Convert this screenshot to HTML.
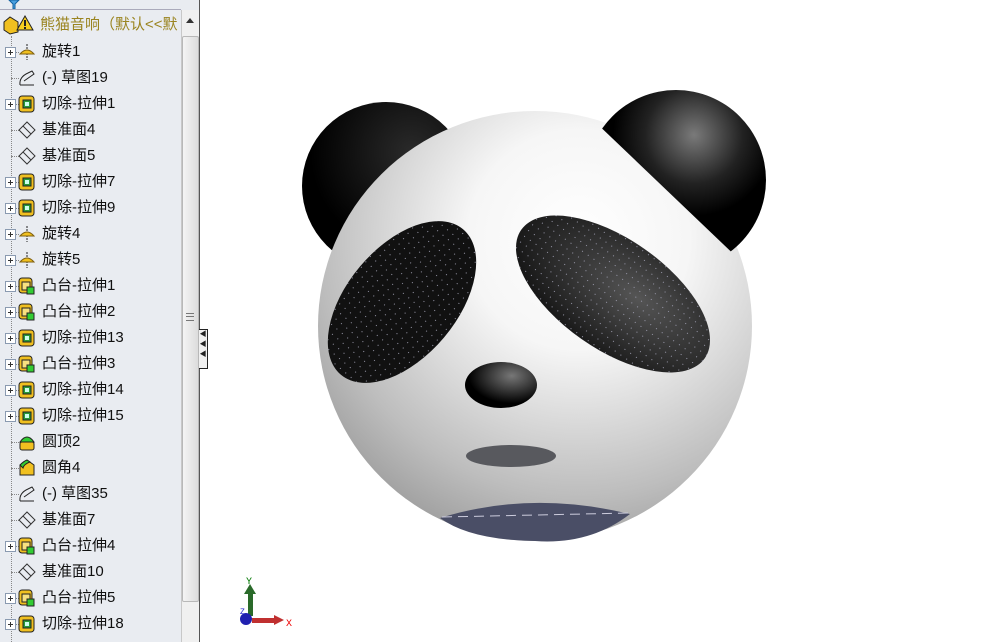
<!DOCTYPE html>
<html><head><meta charset="utf-8"><style>
body{margin:0;width:999px;height:642px;overflow:hidden;background:#fff;position:relative;font-family:"Liberation Sans","Noto Sans CJK SC",sans-serif}
#panel{position:absolute;left:0;top:0;width:199px;height:642px;background:#e9ecf1;border-right:1px solid #555}
.row{position:absolute;left:0;height:26px;width:181px;font-size:15px;color:#111;line-height:26px}
.row span{position:absolute;left:42px;top:0;white-space:nowrap}
.pl{position:absolute;left:5px;top:8px;width:9px;height:9px;border:1px solid #8a9ab0;background:#fff}
.pl:before{content:"";position:absolute;left:2px;top:4px;width:5px;height:1px;background:#333}
.pl:after{content:"";position:absolute;left:4px;top:2px;width:1px;height:5px;background:#333}
.ic{position:absolute;left:18px;top:4px}
#vline{position:absolute;left:11px;top:36px;height:606px;border-left:1px dotted #888}
.hd{position:absolute;left:11px;top:0;width:8px;border-top:1px dotted #888}
</style></head><body>
<svg width="0" height="0" style="position:absolute">
<defs>
<symbol id="cut" viewBox="0 0 18 18"><rect x="1" y="1" width="15" height="16" rx="3" fill="#f0c020" stroke="#222"/><rect x="5" y="5" width="8" height="8" fill="#2a9a3a" stroke="#222"/><rect x="7" y="7" width="4" height="4" fill="#cfe"/></symbol>
<symbol id="boss" viewBox="0 0 18 18"><rect x="1" y="1" width="13" height="15" rx="3" fill="#f0c020" stroke="#222"/><rect x="4" y="5" width="8" height="8" fill="#f6e080" stroke="#222"/><rect x="9" y="10" width="7" height="7" fill="#3c3" stroke="#222"/></symbol>
<symbol id="rev" viewBox="0 0 18 18"><line x1="9" y1="1" x2="9" y2="17" stroke="#222" stroke-dasharray="2 1"/><path d="M2 11 Q9 3 16 11 Z" fill="#f0c020" stroke="#806010"/></symbol>
<symbol id="sk" viewBox="0 0 18 18"><path d="M2 16 Q1 8 10 4 L14 2 L16 5 L6 12 M2 16 H16" fill="none" stroke="#222"/></symbol>
<symbol id="pln" viewBox="0 0 18 18"><path d="M9 1 L17 9 L9 17 L1 9 Z M5 5 L13 13" fill="none" stroke="#333"/></symbol>
<symbol id="dome" viewBox="0 0 18 18"><path d="M2 9 Q9 -1 16 9 Z" fill="#3c3" stroke="#222"/><rect x="2" y="9" width="14" height="8" rx="2" fill="#f0c020" stroke="#222"/></symbol>
<symbol id="fil" viewBox="0 0 18 18"><path d="M2 6 L9 1 L16 6 L16 16 L2 16 Z" fill="#f0c020" stroke="#222"/><path d="M2 6 Q6 2 9 1 L12 3 Q6 5 5 9 Z" fill="#3c3" stroke="#222"/></symbol>
</defs></svg>
<div id="panel">
<svg style="position:absolute;left:8px;top:0" width="12" height="9"><path d="M1 0 H11 L7 4 V9 H5 V4 Z" fill="#4aa0e0" stroke="#1060a0"/></svg>
<div style="position:absolute;left:0;top:9px;width:181px;border-top:1px solid #aab"></div>
<svg style="position:absolute;left:2px;top:14px" width="38" height="22"><path d="M2 8 L8 3 L16 8 L16 18 L8 20 L2 16 Z" fill="#f0c020" stroke="#222"/><path d="M23 2 L31 16 L15 16 Z" fill="#f8d020" stroke="#222"/><rect x="22" y="6" width="2" height="6" fill="#222"/><rect x="22" y="13" width="2" height="2" fill="#222"/></svg>
<div style="position:absolute;left:40px;top:14px;font-size:15px;color:#9a8420;white-space:nowrap;line-height:22px">熊猫音响（默认&lt;&lt;默</div>
<div id="vline"></div>
<div id="rows"></div>
<div style="position:absolute;left:181px;top:10px;width:17px;height:632px;background:#f0f0f0;border-left:1px solid #c8c8c8"></div>
<div style="position:absolute;left:186px;top:18px;width:0;height:0;border-left:4px solid transparent;border-right:4px solid transparent;border-bottom:5px solid #333"></div>
<div style="position:absolute;left:182px;top:36px;width:15px;height:564px;background:linear-gradient(90deg,#f4f4f4,#dcdcdc);border:1px solid #b8b8b8;border-radius:2px"></div>
<div style="position:absolute;left:186px;top:313px;width:8px;height:6px;border-top:1px solid #777;border-bottom:1px solid #777"></div>
<div style="position:absolute;left:186px;top:316px;width:8px;border-top:1px solid #777"></div>
</div>
<div style="position:absolute;left:199px;top:329px;width:8px;height:38px;background:#f0f0f0;border:1px solid #222;border-left:none;font-size:7px;line-height:10px;color:#222;text-align:center">◀<br>◀<br>◀</div>
<svg style="position:absolute;left:0;top:0" width="999" height="642">
<defs>
<radialGradient id="hg" cx="0.6" cy="0.3" r="0.85"><stop offset="0" stop-color="#fff"/><stop offset="0.3" stop-color="#f6f6f6"/><stop offset="0.7" stop-color="#bdbdbd"/><stop offset="1" stop-color="#888"/></radialGradient>
<radialGradient id="eg" cx="0.65" cy="0.3" r="0.6"><stop offset="0" stop-color="#2a2a2a"/><stop offset="1" stop-color="#000"/></radialGradient>
<radialGradient id="eg2" cx="0.6" cy="0.25" r="0.45"><stop offset="0" stop-color="#7a7a7a"/><stop offset="0.6" stop-color="#222"/><stop offset="1" stop-color="#000"/></radialGradient>
<radialGradient id="eye" cx="0.6" cy="0.4" r="0.7"><stop offset="0" stop-color="#555"/><stop offset="1" stop-color="#111"/></radialGradient>
<radialGradient id="ng" cx="0.65" cy="0.3" r="0.6"><stop offset="0" stop-color="#777"/><stop offset="1" stop-color="#000"/></radialGradient>
<pattern id="dots" width="7" height="7" patternUnits="userSpaceOnUse"><rect x="3" y="3" width="1" height="1" fill="#99a"/></pattern>
<clipPath id="ec"><polygon points="590,117 745,265 800,265 800,60 590,60"/></clipPath>
</defs>
<circle cx="386" cy="186" r="84" fill="url(#eg)"/>
<ellipse cx="535" cy="326" rx="217" ry="215" fill="url(#hg)"/>
<circle cx="676" cy="180" r="90" fill="url(#eg2)" clip-path="url(#ec)"/>
<path d="M440 518 Q530 490 630 514 Q590 545 535 541 Q470 540 440 518Z" fill="#4a4e66"/>
<path d="M442 517 L630 513" stroke="#ccd" stroke-dasharray="10 6"/>
<g transform="rotate(-50 402 302)"><ellipse cx="402" cy="302" rx="95" ry="55" fill="#111"/><ellipse cx="402" cy="302" rx="95" ry="55" fill="url(#dots)"/></g>
<g transform="rotate(35 613 294)"><ellipse cx="613" cy="294" rx="112" ry="55" fill="url(#eye)"/><ellipse cx="613" cy="294" rx="112" ry="55" fill="url(#dots)"/></g>
<ellipse cx="501" cy="385" rx="36" ry="23" fill="url(#ng)"/>
<ellipse cx="511" cy="456" rx="45" ry="11" fill="#58595e"/>
<g>
<rect x="248" y="592" width="5" height="24" fill="#2a6a2a"/><polygon points="244,594 250,584 256,594" fill="#2a6a2a"/>
<rect x="252" y="618" width="24" height="5" fill="#c03030"/><polygon points="274,615 284,620 274,625" fill="#c03030"/>
<circle cx="246" cy="619" r="6" fill="#2020b0"/>
<text x="246" y="584" font-size="10" fill="#070" font-family="Liberation Mono">Y</text>
<text x="286" y="626" font-size="10" fill="#e00" font-family="Liberation Mono">X</text>
<text x="240" y="614" font-size="8" fill="#22c" font-family="Liberation Mono">Z</text>
</g>
</svg>
<script>
var d=[["rev","旋转1",1],["sk","(-) 草图19",0],["cut","切除-拉伸1",1],["pln","基准面4",0],["pln","基准面5",0],["cut","切除-拉伸7",1],["cut","切除-拉伸9",1],["rev","旋转4",1],["rev","旋转5",1],["boss","凸台-拉伸1",1],["boss","凸台-拉伸2",1],["cut","切除-拉伸13",1],["boss","凸台-拉伸3",1],["cut","切除-拉伸14",1],["cut","切除-拉伸15",1],["dome","圆顶2",0],["fil","圆角4",0],["sk","(-) 草图35",0],["pln","基准面7",0],["boss","凸台-拉伸4",1],["pln","基准面10",0],["boss","凸台-拉伸5",1],["cut","切除-拉伸18",1]];
var h="";d.forEach(function(r,i){var y=39+i*26;h+='<div class="row" style="top:'+y+'px"><div class="hd" style="top:13px"></div>'+(r[2]?'<div class="pl"></div>':'')+'<svg class="ic" width="18" height="18"><use href="#'+r[0]+'"/></svg><span>'+r[1]+'</span></div>';});
document.getElementById("rows").innerHTML=h;
</script>
</body></html>
